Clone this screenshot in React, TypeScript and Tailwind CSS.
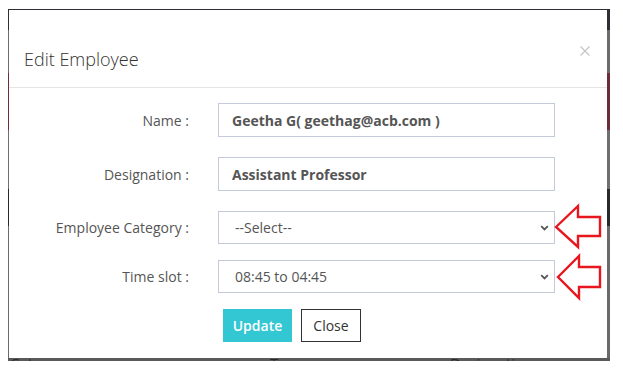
import React from "react";

const FONT = { fontFamily: "'Open Sans', 'Liberation Sans', sans-serif" };

function Chevron() {
  return (
    <svg width="9" height="6" viewBox="0 0 9 6" className="pointer-events-none absolute right-[6px] top-1/2 -translate-y-1/2">
      <path d="M1.2 1.2 4.5 4.5 7.8 1.2" fill="none" stroke="#555" strokeWidth="1.8" />
    </svg>
  );
}

function FormRow({ label, children, className }: { label: string; children: React.ReactNode; className: string }) {
  return (
    <div className={`flex items-center ${className}`}>
      <label className="w-[180px] text-right text-[14px] text-[#555]">{label}</label>
      <div className="ml-[29px] w-[337px] h-full">{children}</div>
    </div>
  );
}

export default function App() {
  return (
    <div className="relative w-[623px] h-[381px] bg-white pl-[8px] pt-[9px] overflow-hidden" style={FONT}>
      {/* page behind the dialog, mostly hidden */}
      <div className="w-[602px] h-[352px] overflow-hidden bg-[linear-gradient(to_bottom,#2c3035_0px,#2c3035_21px,#6b6b6b_21px,#6b6b6b_64px,#6d2c36_64px,#6d2c36_121px,#6f6f6f_121px,#6f6f6f_180px,#2a2a2a_180px,#2a2a2a_217px,#6a6a6a_217px,#6a6a6a_349px,#5a5a5a_349px)]">
        <div className="ml-[1px] mt-[1px] w-[598px] h-[348px] bg-white">
          <div className="relative h-[78px] border-b border-[#e5e5e5] px-[15px] pt-[38px]">
            <h4 className="text-[18px] leading-[22px] font-light text-[#333]">Edit Employee</h4>
            <button className="absolute right-[16px] top-[35px] w-[12px] h-[12px]" aria-label="Close">
              <svg width="12" height="12" viewBox="0 0 12 12">
                <path d="M1.5 1.5 10.5 10.5M10.5 1.5 1.5 10.5" stroke="#c4c4c4" strokeWidth="1.2" />
              </svg>
            </button>
          </div>

          <div className="pt-[15px]">
            <FormRow label="Name :" className="h-[34px] mb-[20px]">
              <input
                readOnly
                value="Geetha G( geethag@acb.com )"
                className="w-full h-full border border-[#c3cad9] px-[13px] text-[14px] font-bold text-[#555] outline-none"
              />
            </FormRow>
            <FormRow label="Designation :" className="h-[34px] mb-[20px]">
              <input
                readOnly
                value="Assistant Professor"
                className="w-full h-full border border-[#c3cad9] px-[13px] text-[14px] font-bold text-[#555] outline-none"
              />
            </FormRow>
            <FormRow label="Employee Category :" className="h-[33px] mb-[16px]">
              <div className="relative h-full">
                <select className="appearance-none w-full h-full border border-[#c3cad9] bg-white pl-[16px] text-[14px] text-[#555] outline-none">
                  <option>--Select--</option>
                </select>
                <Chevron />
              </div>
            </FormRow>
            <FormRow label="Time slot :" className="h-[33px] mb-[16px]">
              <div className="relative h-full">
                <select className="appearance-none w-full h-full border border-[#c3cad9] bg-white pl-[16px] text-[14px] text-[#555] outline-none">
                  <option>08:45 to 04:45</option>
                </select>
                <Chevron />
              </div>
            </FormRow>

            <div className="flex gap-[9px] ml-[214px]">
              <button className="w-[69px] h-[33px] bg-[#33c6d3] text-white text-[14px] font-semibold">Update</button>
              <button className="w-[60px] h-[33px] border border-[#333] bg-white text-[#333] text-[14px]">Close</button>
            </div>
          </div>
        </div>
        <div className="h-[3px] overflow-hidden">
          <div className="flex -mt-[2px] text-[15px] leading-none text-[#2a2a2a]">
            <span className="ml-[2px] w-[260px]">Category</span>
            <span className="w-[180px]">Type</span>
            <span>Designation</span>
          </div>
        </div>
      </div>

      {/* annotation arrows */}
      <svg className="pointer-events-none absolute left-0 top-0" width="623" height="381">
        <polygon
          points="556,227 578,206 578,217 600,217 600,236 578,236 578,247"
          fill="#fff"
          stroke="#e8161e"
          strokeWidth="2.4"
          strokeLinejoin="miter"
        />
        <polygon
          points="558,277 579,256 579,267 600,267 600,287 579,287 579,298"
          fill="#fff"
          stroke="#e8161e"
          strokeWidth="2.4"
          strokeLinejoin="miter"
        />
      </svg>
    </div>
  );
}
